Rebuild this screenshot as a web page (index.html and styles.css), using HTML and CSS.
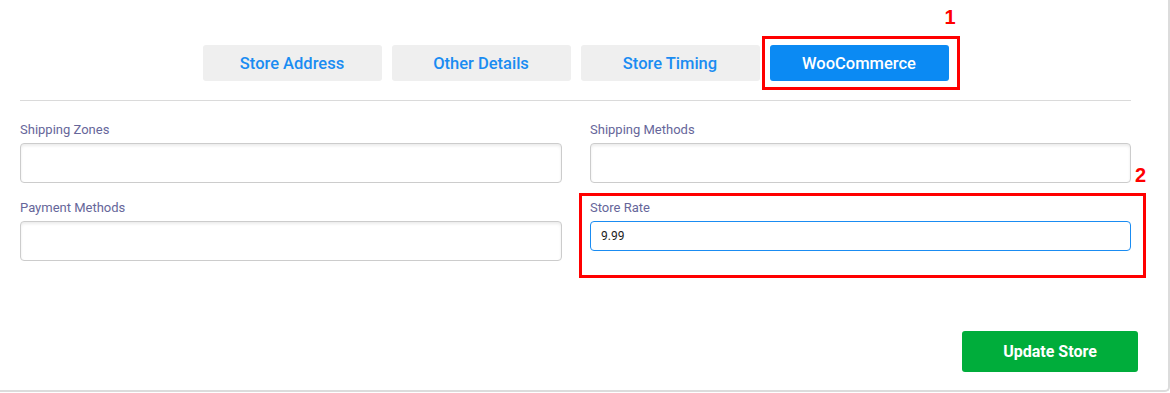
FILE: index.html
```html
<!DOCTYPE html>
<html>
<head>
<title>Edit Store</title>
<link rel="stylesheet" href="styles.css">
</head>
<body>
<div class="card">
  <div class="tabs">
    <button class="tab">Store Address</button>
    <button class="tab">Other Details</button>
    <button class="tab">Store Timing</button>
    <div class="marked">
      <button class="tab active">WooCommerce</button>
      <span class="mark-box mark-tab"></span>
      <span class="mark-num num-1">1</span>
    </div>
  </div>
  <hr class="divider">
  <div class="fields">
    <div class="field">
      <label>Shipping Zones</label>
      <input type="text" class="tall">
    </div>
    <div class="field">
      <label>Shipping Methods</label>
      <input type="text" class="tall">
    </div>
    <div class="field">
      <label>Payment Methods</label>
      <input type="text" class="tall">
    </div>
    <div class="field marked">
      <label>Store Rate</label>
      <input type="text" class="short focused" value="9.99">
      <span class="mark-box mark-field"></span>
      <span class="mark-num num-2">2</span>
    </div>
  </div>
  <div class="footer">
    <button class="update-button">Update Store</button>
  </div>
</div>
</body>
</html>
```

FILE: styles.css
```css
body {
  margin: 0;
  background-color: white;
  font-family: Roboto, "Liberation Sans", sans-serif;
}

.card {
  width: 1111px;
  height: 345px;
  padding: 45px 37px 0 20px;
  background-color: white;
  border-right: 2px solid #dcdcdc;
  border-bottom: 2px solid #dcdcdc;
  border-bottom-right-radius: 5px;
}

.tabs {
  display: flex;
  justify-content: center;
  gap: 10px;
}

.tab {
  width: 179px;
  height: 36px;
  border: none;
  border-radius: 3px;
  background-color: #efefef;
  color: #1a8cf2;
  font-family: Roboto, "Liberation Sans", sans-serif;
  font-size: 16.5px;
  font-weight: 500;
  padding: 0;
}

.tab.active {
  background-color: #0b8af3;
  color: white;
}

.marked {
  position: relative;
}

.mark-box {
  position: absolute;
  border: 3px solid #f00;
}

.mark-tab {
  left: -8px;
  right: -11px;
  top: -9px;
  bottom: -9px;
}

.mark-num {
  position: absolute;
  color: #f00;
  font-family: "Liberation Sans", Arial, sans-serif;
  font-weight: bold;
  font-size: 20px;
}

.num-1 {
  right: -7px;
  top: -39px;
}

.num-2 {
  right: -15px;
  top: -35px;
}

.divider {
  margin: 19px 0 0;
  border: none;
  border-top: 1px solid #dadada;
}

.fields {
  display: grid;
  grid-template-columns: 542px 541px;
  column-gap: 28px;
  row-gap: 16px;
  margin-top: 20px;
}

.field {
  display: flex;
  flex-direction: column;
  gap: 5px;
}

.field label {
  font-size: 13px;
  line-height: 17px;
  color: #66669a;
}

.field input {
  box-sizing: border-box;
  width: 100%;
  border: 1px solid #cccccc;
  border-radius: 4px;
  box-shadow: inset 0 2px 3px rgba(0, 0, 0, 0.08);
  padding: 0 10px;
  font-family: Roboto, "Liberation Sans", sans-serif;
  font-size: 12px;
  color: #222;
}

.field input.tall {
  height: 40px;
}

.field input.short {
  height: 30px;
}

.field input.focused {
  border-color: #1a8cf2;
  box-shadow: none;
  outline: none;
}

.mark-field {
  left: -11px;
  right: -15px;
  top: -6px;
  bottom: -17px;
}

.footer {
  display: flex;
  justify-content: flex-end;
  margin-top: 70px;
  margin-right: -7px;
}

.update-button {
  width: 176px;
  height: 41px;
  border: none;
  border-radius: 3px;
  background-color: #00ad3b;
  color: white;
  font-family: Roboto, "Liberation Sans", sans-serif;
  font-size: 16px;
  font-weight: bold;
}
```
